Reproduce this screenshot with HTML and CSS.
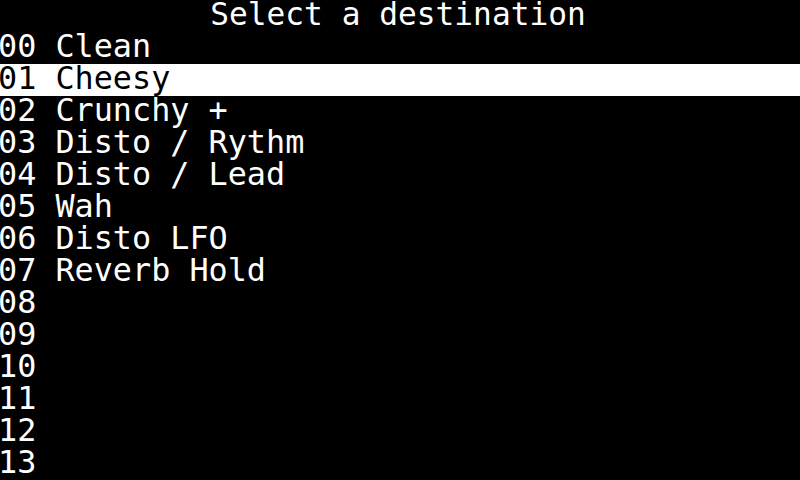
FILE: index.html
```html
<!DOCTYPE html>
<html>
<head>
<meta charset="utf-8">
<link rel="stylesheet" href="styles.css">
</head>
<body>
<div class="screen">
  <div class="title">Select a destination</div>
  <ul class="list">
    <li class="row">00 Clean</li>
    <li class="row selected">01 Cheesy</li>
    <li class="row">02 Crunchy +</li>
    <li class="row">03 Disto / Rythm</li>
    <li class="row">04 Disto / Lead</li>
    <li class="row">05 Wah</li>
    <li class="row">06 Disto LFO</li>
    <li class="row">07 Reverb Hold</li>
    <li class="row">08</li>
    <li class="row">09</li>
    <li class="row">10</li>
    <li class="row">11</li>
    <li class="row">12</li>
    <li class="row">13</li>
  </ul>
</div>
</body>
</html>
```
FILE: styles.css
```css
html, body {
  margin: 0;
  padding: 0;
  background: #000;
}
.screen {
  width: 800px;
  height: 480px;
  overflow: hidden;
  background: #000;
  color: #fff;
  font-family: "DejaVu Sans Mono", monospace;
  font-size: 31.8px;
  line-height: 28.8px;
  display: flex;
  flex-direction: column;
}
.title {
  height: 32px;
  margin-right: 4px;
  font-size: 31.2px;
  text-align: center;
  white-space: pre;
}
.list {
  list-style: none;
  margin: 0;
  padding: 0;
}
.row {
  height: 32px;
  white-space: pre;
  text-indent: -2px;
}
.row.selected {
  background: #fff;
  color: #000;
}
```
